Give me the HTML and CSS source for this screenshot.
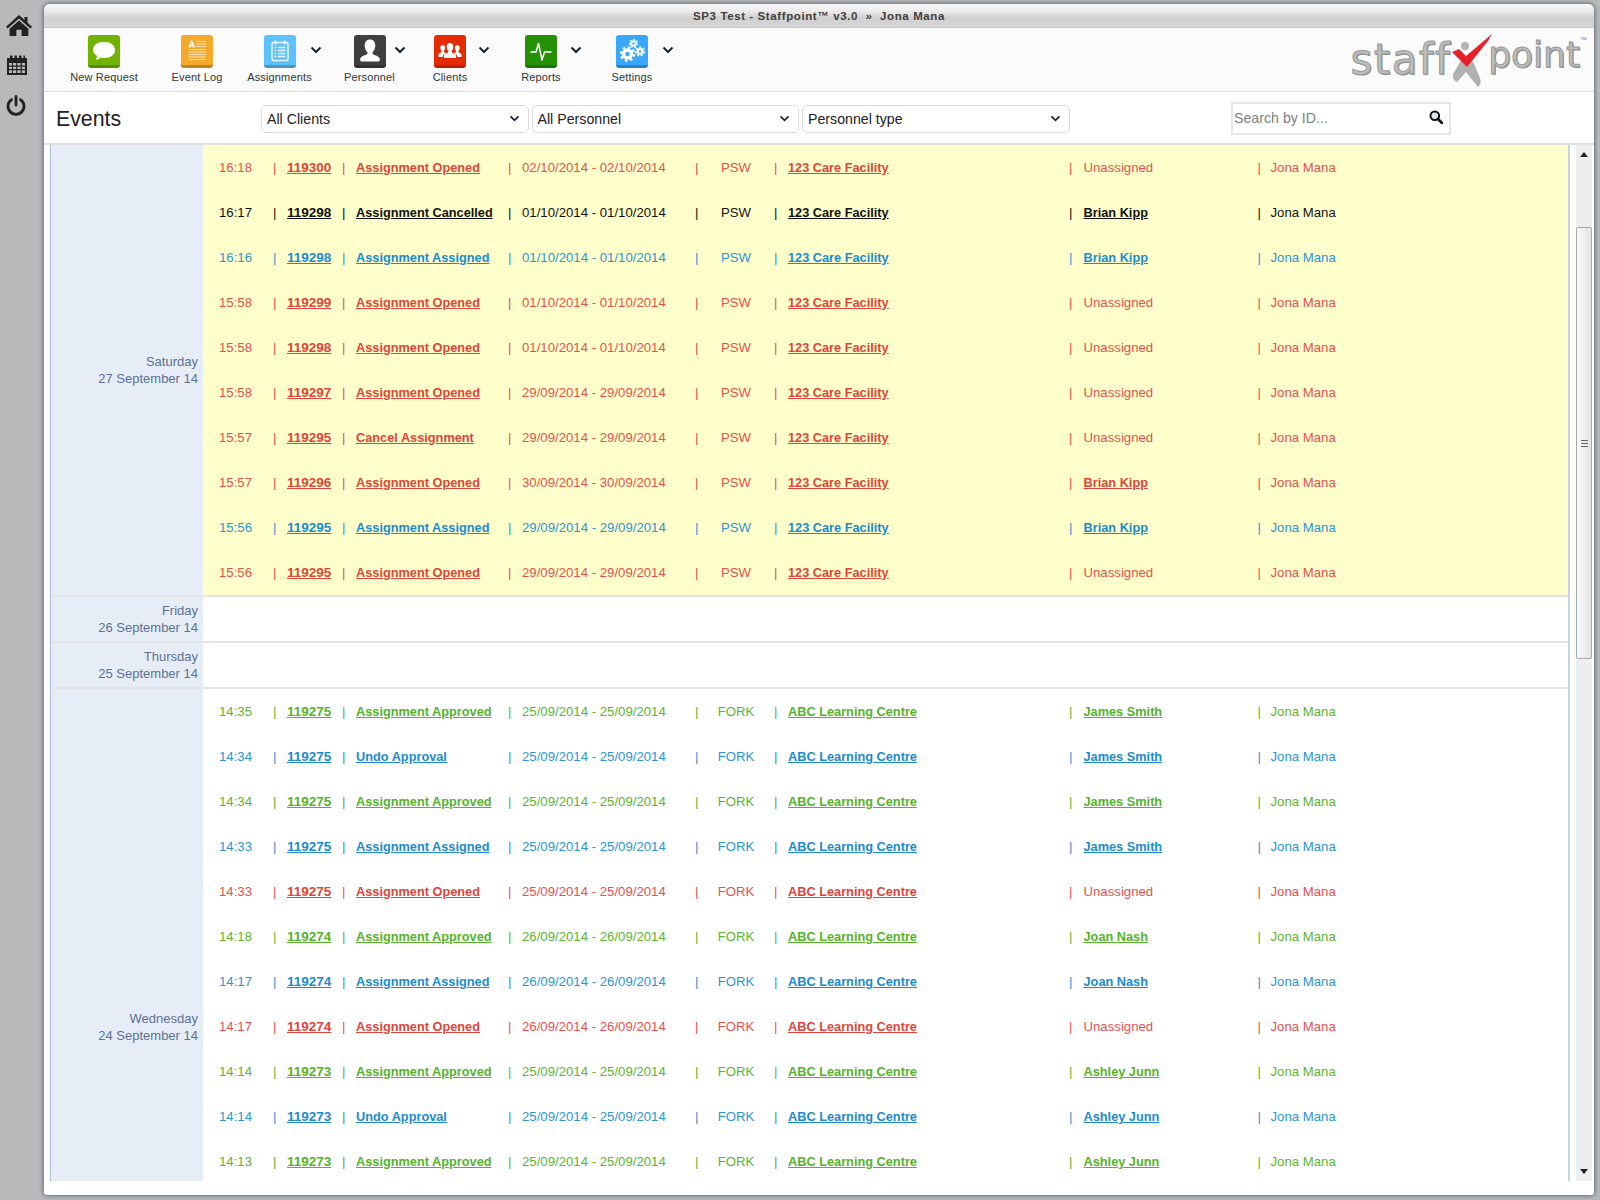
FILE: index.html
```html
<!DOCTYPE html>
<html lang="en">
<head>
<meta charset="utf-8">
<title>SP3 Test - Staffpoint v3.0</title>
<link rel="stylesheet" href="styles.css">
</head>
<body>
<nav class="rail">
  <svg class="rail-home" viewBox="0 0 26 21"><path d="M13 0 L18.5 5 V2 H21.5 V7.7 L26 11.8 L24.4 13.5 L13 3.4 L1.6 13.5 L0 11.8 Z"/><path d="M13 5.4 L22.4 13.7 V21 H15.6 V14.8 H10.4 V21 H3.6 V13.7 Z"/></svg>
  <svg class="rail-cal" viewBox="0 0 20 20"><path fill-rule="evenodd" d="M1 3 H3 V0.5 H5.5 V3 H7.5 V0.5 H10 V3 H12 V0.5 H14.5 V3 H16.5 V0.5 H18 V3 H20 V20 H0 V3 Z M2 8 V10.5 H5 V8 Z M6 8 V10.5 H9.2 V8 Z M10.4 8 V10.5 H13.6 V8 Z M14.8 8 V10.5 H18 V8 Z M2 11.7 V14 H5 V11.7 Z M6 11.7 V14 H9.2 V11.7 Z M10.4 11.7 V14 H13.6 V11.7 Z M14.8 11.7 V14 H18 V11.7 Z M2 15.2 V18 H5 V15.2 Z M6 15.2 V18 H9.2 V15.2 Z M10.4 15.2 V18 H13.6 V15.2 Z M14.8 15.2 V18 H18 V15.2 Z"/></svg>
  <svg class="rail-power" viewBox="0 0 20 21"><path d="M5.6 4.6 A8 8 0 1 0 14.4 4.6" fill="none" stroke-width="2.8" stroke-linecap="round"/><path d="M10 1.5 V10" fill="none" stroke-width="2.8" stroke-linecap="round"/></svg>
</nav>
<main class="window">
  <header class="titlebar">SP3 Test - Staffpoint™ v3.0 &nbsp;»&nbsp; Jona Mana</header>
  <div class="toolbar">
    <div class="tools">
      <div class="tool t-request"><div class="tool-col"><span class="ico ico-green"><svg viewBox="0 0 32 33"><path fill="#fff" d="M16 7 C23 7 27 10.500 27 15 C27 19.500 23 23 16 23 C14.800 23 13.700 22.900 12.700 22.600 C11 24.300 9 25 7.500 25 C8.500 23.800 9 22.300 9 20.800 C6.500 19.400 5 17.400 5 15 C5 10.500 9 7 16 7 Z"/></svg></span><span class="tool-label">New Request</span></div></div>
      <div class="tool t-log"><div class="tool-col"><span class="ico ico-orange"><svg viewBox="0 0 32 33"><path fill="#fff" d="M7.500 13 L10 5.500 H11.500 L14 13 H12.400 L12 11.500 H9.500 L9.100 13 Z M10 10.200 H11.500 L10.700 7.500 Z"/><path stroke="#fde3b0" stroke-width="1.200" d="M15 6.500 H25 M15 9 H25 M15 11.500 H25 M7.500 14.500 H25 M7.500 17 H25 M7.500 19.500 H25 M7.500 22 H25 M7.500 24.500 H25"/></svg></span><span class="tool-label">Event Log</span></div></div>
      <div class="tool t-assign"><div class="tool-col"><span class="ico ico-sky"><svg viewBox="0 0 32 33"><rect x="8" y="7.500" width="16" height="18" rx="1.500" fill="none" stroke="#e8f7ff" stroke-width="1.500"/><path stroke="#e8f7ff" stroke-width="2" d="M11.500 5.500 V9.500 M20.500 5.500 V9.500"/><path stroke="#e8f7ff" stroke-width="1.300" d="M10.500 12.500 H12.500 M14 12.500 H21.500 M10.500 15.500 H12.500 M14 15.500 H21.500 M10.500 18.500 H12.500 M14 18.500 H21.500 M10.500 21.500 H12.500 M14 21.500 H21.500"/></svg></span><span class="tool-label">Assignments</span></div><svg class="chev" viewBox="0 0 12 8"><path d="M1.500 1.500 L6 6 L10.500 1.500"/></svg></div>
      <div class="tool t-person"><div class="tool-col"><span class="ico ico-dark"><svg viewBox="0 0 32 33"><path fill="#fff" d="M16 4.500 C19.500 4.500 21.300 7 21.300 10.500 C21.300 13.500 20 15.800 18.600 17 V18.800 C18.600 20 24 20.300 25.600 23.300 C26.300 24.700 25.800 26.500 24 26.500 H8 C6.200 26.500 5.700 24.700 6.400 23.300 C8 20.300 13.400 20 13.400 18.800 V17 C12 15.800 10.700 13.500 10.700 10.500 C10.700 7 12.500 4.500 16 4.500 Z"/></svg></span><span class="tool-label">Personnel</span></div><svg class="chev" viewBox="0 0 12 8"><path d="M1.500 1.500 L6 6 L10.500 1.500"/></svg></div>
      <div class="tool t-client"><div class="tool-col"><span class="ico ico-red"><svg viewBox="0 0 32 33"><path fill="#fff" d="M16 8 C18 8 19.300 9.600 19.300 11.800 C19.300 13.600 18.600 15 17.700 15.800 V17 C17.700 18 21.500 18.200 22 20.200 V23 H10 V20.200 C10.500 18.200 14.300 18 14.300 17 V15.800 C13.400 15 12.700 13.600 12.700 11.800 C12.700 9.600 14 8 16 8 Z"/><path fill="#fff" d="M8.700 10 C10 10 11 11 11.100 12.500 C11.100 14 10.600 15.200 9.900 15.800 V16.800 C10.500 17.300 11.500 17.600 12 18.200 C10 18.800 8.800 19.800 8.800 22 H4.500 V19.500 C4.800 18 7.500 17.800 7.500 16.800 V15.800 C6.800 15.200 6.300 14 6.300 12.500 C6.400 11 7.400 10 8.700 10 Z M23.300 10 C24.600 10 25.600 11 25.700 12.500 C25.700 14 25.200 15.200 24.500 15.800 V16.800 C24.500 17.800 27.200 18 27.500 19.500 V22 H23.200 C23.200 19.800 22 18.800 20 18.200 C20.500 17.600 21.500 17.300 22.100 16.800 V15.800 C21.400 15.200 20.900 14 20.900 12.500 C21 11 22 10 23.300 10 Z"/></svg></span><span class="tool-label">Clients</span></div><svg class="chev" viewBox="0 0 12 8"><path d="M1.500 1.500 L6 6 L10.500 1.500"/></svg></div>
      <div class="tool t-report"><div class="tool-col"><span class="ico ico-forest"><svg viewBox="0 0 32 33"><path fill="none" stroke="#fff" stroke-width="1.500" stroke-linejoin="round" d="M5.500 17 H11 L13.500 8.500 L17 25 L19.500 17 H26.500"/></svg></span><span class="tool-label">Reports</span></div><svg class="chev" viewBox="0 0 12 8"><path d="M1.500 1.500 L6 6 L10.500 1.500"/></svg></div>
      <div class="tool t-settings"><div class="tool-col"><span class="ico ico-blue"><svg viewBox="0 0 32 33"><g fill="none" stroke="#fff"><circle cx="11.500" cy="19" r="4" stroke-width="3.500"/><circle cx="11.500" cy="19" r="6.600" stroke-width="2.400" stroke-dasharray="2.600 2.600"/><circle cx="24" cy="16.500" r="2.400" stroke-width="2.400"/><circle cx="24" cy="16.500" r="4.300" stroke-width="1.800" stroke-dasharray="1.900 1.900"/><circle cx="17.500" cy="8.500" r="2.200" stroke-width="2"/><circle cx="17.500" cy="8.500" r="3.800" stroke-width="1.600" stroke-dasharray="1.700 1.700"/></g></svg></span><span class="tool-label">Settings</span></div><svg class="chev" viewBox="0 0 12 8"><path d="M1.500 1.500 L6 6 L10.500 1.500"/></svg></div>
    </div>
    <div class="logo">
      <span class="logo-word logo-staff">staff</span>
      <svg class="logo-mark" viewBox="0 0 40 54"><circle cx="13" cy="12" r="4.200" fill="#b4b4b4"/><path fill="#b0b0b0" d="M10 25 L20 25 L28 44 Q30 50 26 53 L14 38 L5 48 Q0 46 1 40 Z"/><path fill="#e8202a" d="M0 18 L7 15 L14 22 L40 0 L36 7 L15 33 Z"/></svg>
      <span class="logo-word logo-point">point</span>
      <span class="logo-tm">™</span>
    </div>
  </div>
  <div class="filterbar">
    <h1 class="page-title">Events</h1>
    <div class="selects">
      <div class="select"><span>All Clients</span><svg class="select-chev" viewBox="0 0 12 8"><path d="M1.500 1.500 L6 6 L10.500 1.500"/></svg></div>
      <div class="select"><span>All Personnel</span><svg class="select-chev" viewBox="0 0 12 8"><path d="M1.500 1.500 L6 6 L10.500 1.500"/></svg></div>
      <div class="select"><span>Personnel type</span><svg class="select-chev" viewBox="0 0 12 8"><path d="M1.500 1.500 L6 6 L10.500 1.500"/></svg></div>
    </div>
    <div class="search"><span>Search by ID...</span><svg viewBox="0 0 14 14"><circle cx="5.800" cy="5.800" r="4.300" fill="#dde8ee" stroke="#111" stroke-width="2"/><path d="M9 9 L13 13" stroke="#111" stroke-width="2.600" stroke-linecap="round"/></svg></div>
  </div>
  <div class="body">
    <div class="events">
      <section class="day">
        <div class="day-label"><span>Saturday<br>27 September 14</span></div>
        <div class="day-rows day-new">
          <div class="row red"><span>16:18</span><span>|</span><a href="#">119300</a><span>|</span><a href="#">Assignment Opened</a><span>|</span><span>02/10/2014 - 02/10/2014</span><span>|</span><span class="type">PSW</span><span>|</span><a href="#">123 Care Facility</a><span>|</span><span>Unassigned</span><span>|</span><span>Jona Mana</span></div>
          <div class="row black"><span>16:17</span><span>|</span><a href="#">119298</a><span>|</span><a href="#">Assignment Cancelled</a><span>|</span><span>01/10/2014 - 01/10/2014</span><span>|</span><span class="type">PSW</span><span>|</span><a href="#">123 Care Facility</a><span>|</span><a href="#">Brian Kipp</a><span>|</span><span>Jona Mana</span></div>
          <div class="row blue"><span>16:16</span><span>|</span><a href="#">119298</a><span>|</span><a href="#">Assignment Assigned</a><span>|</span><span>01/10/2014 - 01/10/2014</span><span>|</span><span class="type">PSW</span><span>|</span><a href="#">123 Care Facility</a><span>|</span><a href="#">Brian Kipp</a><span>|</span><span>Jona Mana</span></div>
          <div class="row red"><span>15:58</span><span>|</span><a href="#">119299</a><span>|</span><a href="#">Assignment Opened</a><span>|</span><span>01/10/2014 - 01/10/2014</span><span>|</span><span class="type">PSW</span><span>|</span><a href="#">123 Care Facility</a><span>|</span><span>Unassigned</span><span>|</span><span>Jona Mana</span></div>
          <div class="row red"><span>15:58</span><span>|</span><a href="#">119298</a><span>|</span><a href="#">Assignment Opened</a><span>|</span><span>01/10/2014 - 01/10/2014</span><span>|</span><span class="type">PSW</span><span>|</span><a href="#">123 Care Facility</a><span>|</span><span>Unassigned</span><span>|</span><span>Jona Mana</span></div>
          <div class="row red"><span>15:58</span><span>|</span><a href="#">119297</a><span>|</span><a href="#">Assignment Opened</a><span>|</span><span>29/09/2014 - 29/09/2014</span><span>|</span><span class="type">PSW</span><span>|</span><a href="#">123 Care Facility</a><span>|</span><span>Unassigned</span><span>|</span><span>Jona Mana</span></div>
          <div class="row red"><span>15:57</span><span>|</span><a href="#">119295</a><span>|</span><a href="#">Cancel Assignment</a><span>|</span><span>29/09/2014 - 29/09/2014</span><span>|</span><span class="type">PSW</span><span>|</span><a href="#">123 Care Facility</a><span>|</span><span>Unassigned</span><span>|</span><span>Jona Mana</span></div>
          <div class="row red"><span>15:57</span><span>|</span><a href="#">119296</a><span>|</span><a href="#">Assignment Opened</a><span>|</span><span>30/09/2014 - 30/09/2014</span><span>|</span><span class="type">PSW</span><span>|</span><a href="#">123 Care Facility</a><span>|</span><a href="#">Brian Kipp</a><span>|</span><span>Jona Mana</span></div>
          <div class="row blue"><span>15:56</span><span>|</span><a href="#">119295</a><span>|</span><a href="#">Assignment Assigned</a><span>|</span><span>29/09/2014 - 29/09/2014</span><span>|</span><span class="type">PSW</span><span>|</span><a href="#">123 Care Facility</a><span>|</span><a href="#">Brian Kipp</a><span>|</span><span>Jona Mana</span></div>
          <div class="row red"><span>15:56</span><span>|</span><a href="#">119295</a><span>|</span><a href="#">Assignment Opened</a><span>|</span><span>29/09/2014 - 29/09/2014</span><span>|</span><span class="type">PSW</span><span>|</span><a href="#">123 Care Facility</a><span>|</span><span>Unassigned</span><span>|</span><span>Jona Mana</span></div>
        </div>
      </section>
      <section class="day day-empty">
        <div class="day-label"><span>Friday<br>26 September 14</span></div>
        <div class="day-rows"></div>
      </section>
      <section class="day day-empty">
        <div class="day-label"><span>Thursday<br>25 September 14</span></div>
        <div class="day-rows"></div>
      </section>
      <section class="day">
        <div class="day-label"><span>Wednesday<br>24 September 14</span></div>
        <div class="day-rows day-long">
          <div class="row green"><span>14:35</span><span>|</span><a href="#">119275</a><span>|</span><a href="#">Assignment Approved</a><span>|</span><span>25/09/2014 - 25/09/2014</span><span>|</span><span class="type">FORK</span><span>|</span><a href="#">ABC Learning Centre</a><span>|</span><a href="#">James Smith</a><span>|</span><span>Jona Mana</span></div>
          <div class="row blue"><span>14:34</span><span>|</span><a href="#">119275</a><span>|</span><a href="#">Undo Approval</a><span>|</span><span>25/09/2014 - 25/09/2014</span><span>|</span><span class="type">FORK</span><span>|</span><a href="#">ABC Learning Centre</a><span>|</span><a href="#">James Smith</a><span>|</span><span>Jona Mana</span></div>
          <div class="row green"><span>14:34</span><span>|</span><a href="#">119275</a><span>|</span><a href="#">Assignment Approved</a><span>|</span><span>25/09/2014 - 25/09/2014</span><span>|</span><span class="type">FORK</span><span>|</span><a href="#">ABC Learning Centre</a><span>|</span><a href="#">James Smith</a><span>|</span><span>Jona Mana</span></div>
          <div class="row blue"><span>14:33</span><span>|</span><a href="#">119275</a><span>|</span><a href="#">Assignment Assigned</a><span>|</span><span>25/09/2014 - 25/09/2014</span><span>|</span><span class="type">FORK</span><span>|</span><a href="#">ABC Learning Centre</a><span>|</span><a href="#">James Smith</a><span>|</span><span>Jona Mana</span></div>
          <div class="row red"><span>14:33</span><span>|</span><a href="#">119275</a><span>|</span><a href="#">Assignment Opened</a><span>|</span><span>25/09/2014 - 25/09/2014</span><span>|</span><span class="type">FORK</span><span>|</span><a href="#">ABC Learning Centre</a><span>|</span><span>Unassigned</span><span>|</span><span>Jona Mana</span></div>
          <div class="row green"><span>14:18</span><span>|</span><a href="#">119274</a><span>|</span><a href="#">Assignment Approved</a><span>|</span><span>26/09/2014 - 26/09/2014</span><span>|</span><span class="type">FORK</span><span>|</span><a href="#">ABC Learning Centre</a><span>|</span><a href="#">Joan Nash</a><span>|</span><span>Jona Mana</span></div>
          <div class="row blue"><span>14:17</span><span>|</span><a href="#">119274</a><span>|</span><a href="#">Assignment Assigned</a><span>|</span><span>26/09/2014 - 26/09/2014</span><span>|</span><span class="type">FORK</span><span>|</span><a href="#">ABC Learning Centre</a><span>|</span><a href="#">Joan Nash</a><span>|</span><span>Jona Mana</span></div>
          <div class="row red"><span>14:17</span><span>|</span><a href="#">119274</a><span>|</span><a href="#">Assignment Opened</a><span>|</span><span>26/09/2014 - 26/09/2014</span><span>|</span><span class="type">FORK</span><span>|</span><a href="#">ABC Learning Centre</a><span>|</span><span>Unassigned</span><span>|</span><span>Jona Mana</span></div>
          <div class="row green"><span>14:14</span><span>|</span><a href="#">119273</a><span>|</span><a href="#">Assignment Approved</a><span>|</span><span>25/09/2014 - 25/09/2014</span><span>|</span><span class="type">FORK</span><span>|</span><a href="#">ABC Learning Centre</a><span>|</span><a href="#">Ashley Junn</a><span>|</span><span>Jona Mana</span></div>
          <div class="row blue"><span>14:14</span><span>|</span><a href="#">119273</a><span>|</span><a href="#">Undo Approval</a><span>|</span><span>25/09/2014 - 25/09/2014</span><span>|</span><span class="type">FORK</span><span>|</span><a href="#">ABC Learning Centre</a><span>|</span><a href="#">Ashley Junn</a><span>|</span><span>Jona Mana</span></div>
          <div class="row green"><span>14:13</span><span>|</span><a href="#">119273</a><span>|</span><a href="#">Assignment Approved</a><span>|</span><span>25/09/2014 - 25/09/2014</span><span>|</span><span class="type">FORK</span><span>|</span><a href="#">ABC Learning Centre</a><span>|</span><a href="#">Ashley Junn</a><span>|</span><span>Jona Mana</span></div>
        </div>
      </section>
    </div>
    <div class="scrollbar">
      <svg class="sb-arrow" viewBox="0 0 8 5"><path d="M4 0 L8 5 H0 Z"/></svg>
      <div class="sb-track"><div class="sb-thumb"><span class="sb-grip"></span></div></div>
      <svg class="sb-arrow" viewBox="0 0 8 5"><path d="M0 0 H8 L4 5 Z"/></svg>
    </div>
  </div>
</main>
</body>
</html>
```
FILE: styles.css
```css
* { box-sizing: border-box; }
html, body { height: 100%; }
body {
  margin: 0;
  height: 1200px;
  overflow: hidden;
  display: flex;
  background: #b7b9bb;
  font-family: "Liberation Sans", Arial, sans-serif;
  color: #222;
}

/* left rail */
.rail {
  width: 44px;
  flex: none;
  display: flex;
  flex-direction: column;
  align-items: flex-start;
  padding: 15px 0 0 6px;
}
.rail svg { display: block; fill: #222; stroke: #222; stroke-width: 0; }
.rail-home { width: 26px; height: 21px; }
.rail-cal { width: 20px; height: 20px; margin: 19px 0 0 1px; }
.rail-power { width: 20px; height: 21px; margin: 20px 0 0 0; fill: none; }
.rail-power path { stroke-width: 2.8; }

/* window */
.window {
  flex: 1;
  margin: 4px 6px 5px 0;
  background: #fff;
  border-radius: 6px 6px 3px 3px;
  box-shadow: 0 0 5px rgba(30, 40, 50, .75);
  display: flex;
  flex-direction: column;
  overflow: hidden;
}
.titlebar {
  height: 24px;
  flex: none;
  background: linear-gradient(#f8f8f8 0, #e9e9e9 35%, #cfcfcf 60%, #d6d6d6 100%);
  border-bottom: 1px solid #c9c9c9;
  text-align: center;
  font-size: 11.500px;
  font-weight: bold;
  letter-spacing: .6px;
  line-height: 24px;
  color: #404040;
}
.toolbar {
  height: 64px;
  flex: none;
  background: #fbfbfb;
  border-bottom: 1px solid #dcdcdc;
  display: flex;
  justify-content: space-between;
}
.tools {
  display: grid;
  grid-template-columns: 100px 77px 96px 76px 91px 90px auto;
  padding: 7px 0 0 27px;
  align-items: start;
}
.tool { display: flex; align-items: flex-start; }
.tool-col { display: flex; flex-direction: column; align-items: center; width: 62px; }
.t-request .tool-col { width: 66px; }
.t-log .tool-col { width: 52px; }
.t-assign .tool-col { width: 63px; }
.t-person .tool-col { width: 51px; }
.t-client .tool-col { width: 58px; margin-left: 1px; }
.t-report .tool-col { width: 60px; }
.ico {
  display: block;
  width: 32px;
  height: 33px;
  border-radius: 3px;
  overflow: hidden;
  border-bottom: 3px solid rgba(0, 0, 0, .22);
}
.ico svg { display: block; width: 32px; height: 33px; }
.ico-green { background: #71b400; }
.ico-orange { background: #f6a82d; }
.ico-sky { background: #5ec1fb; }
.ico-dark { background: #3f3f3f; }
.ico-red { background: #e42b02; }
.ico-forest { background: #249105; }
.ico-blue { background: #39a7fb; }
.tool-label {
  display: block;
  margin-top: 2px;
  font-size: 11px;
  line-height: 14px;
  letter-spacing: .15px;
  white-space: nowrap;
  color: #333;
}
.chev {
  width: 12px;
  height: 8px;
  margin: 11px 0 0 -1px;
  flex: none;
  fill: none;
  stroke: #1a2230;
  stroke-width: 2;
}

/* logo */
.logo {
  display: flex;
  align-items: flex-start;
  padding: 6px 7px 0 0;
  height: 60px;
}
.logo-word {
  font-family: "DejaVu Sans", sans-serif;
  font-weight: normal;
  color: #bdbdbd;
  -webkit-text-stroke: 1px #999;
  text-shadow: 1px 1px 0 #8f8f8f;
}
.logo-staff {
  font-size: 42px;
  line-height: 48px;
  letter-spacing: 1.400px;
  margin-top: 2px;
}
.logo-point {
  font-size: 36px;
  line-height: 42px;
  margin-top: 0;
}
.logo-mark { width: 40px; height: 54px; flex: none; margin: 0 -4px 0 1px; }
.logo-tm { font-size: 7px; color: #888; margin-top: 2px; }

/* filter bar */
.filterbar {
  height: 53px;
  flex: none;
  display: flex;
  align-items: center;
  padding: 1px 0 0 12px;
  border-bottom: 2px solid #e0e0e0;
}
.page-title {
  margin: 2px 0 0;
  width: 205px;
  flex: none;
  font-size: 21.300px;
  font-weight: normal;
  color: #222;
}
.selects { display: flex; gap: 3px; margin-top: 1px; }
.select {
  width: 267.500px;
  height: 28px;
  padding: 0 8px 0 5px;
  border: 1px solid #dcdcdc;
  border-radius: 5px;
  background: #fff;
  display: flex;
  align-items: center;
  justify-content: space-between;
  font-size: 14.200px;
  color: #222;
}
.select-chev {
  width: 11px;
  height: 7px;
  fill: none;
  stroke: #1a2230;
  stroke-width: 2;
}
.search {
  width: 220px;
  height: 33px;
  margin-left: 161.500px;
  padding: 0 6px 0 1px;
  border: 2px solid #e6e6e6;
  display: flex;
  align-items: center;
  justify-content: space-between;
  font-size: 14.200px;
  color: #808080;
}
.search svg { width: 14px; height: 14px; margin: -3px 0 0 0; }

/* events list */
.body {
  flex: 1;
  min-height: 0;
  display: flex;
  padding: 0 2px 14px 6px;
}
.events {
  flex: 1;
  min-width: 0;
  overflow: hidden;
  border-left: 1px solid #a9bdd6;
  border-right: 2px solid #c9d6e6;
}
.day { display: flex; border-bottom: 2px solid #e4e4e4; }
.day-label {
  width: 152px;
  flex: none;
  background: #e6edf7;
  padding-right: 5px;
  display: flex;
  align-items: center;
  justify-content: flex-end;
  text-align: right;
  font-size: 13px;
  line-height: 17px;
  color: #5c7196;
  white-space: nowrap;
}
.day-rows { flex: 1; min-width: 0; }
.day-new { background: #ffffcb; }
.day-long { min-height: 675px; }
.day-empty { height: 46px; }
.row {
  height: 45px;
  display: grid;
  grid-template-columns: 54px 14px 55px 14px 152px 14px 173px 15px 64px 14px 281px 14.500px 174px 13px auto;
  padding-left: 16px;
  align-items: center;
  font-size: 13.200px;
  white-space: nowrap;
}
.row a { font-weight: bold; font-size: 12.750px; color: inherit; text-decoration: underline; justify-self: start; }
.row a:first-of-type { font-size: 13.500px; }
.type { padding-right: 12px; text-align: center; }
.red { color: #e8504f; }
.red a { color: #e0443a; }
.black { color: #111; }
.black a { color: #111; }
.blue { color: #2b95d6; }
.blue a { color: #1a8bd0; }
.green { color: #5cb630; }
.green a { color: #55b32a; }

/* scrollbar */
.scrollbar {
  width: 16px;
  flex: none;
  margin-left: 6px;
  background: #eeeeee;
  display: flex;
  flex-direction: column;
  align-items: center;
  padding: 7px 0 7px;
}
.sb-arrow { width: 8px; height: 5px; flex: none; fill: #222; }
.sb-track { flex: 1; width: 100%; padding-top: 70px; }
.sb-thumb {
  height: 432px;
  margin-bottom: 0;
  border: 1px solid #a8a8a8;
  border-radius: 2px;
  background: linear-gradient(90deg, #fafafa, #e2e2e2);
  display: flex;
  align-items: center;
  justify-content: center;
}
.sb-grip {
  width: 7px;
  height: 7px;
  background: repeating-linear-gradient(#666 0 1px, transparent 1px 3px);
}
```
